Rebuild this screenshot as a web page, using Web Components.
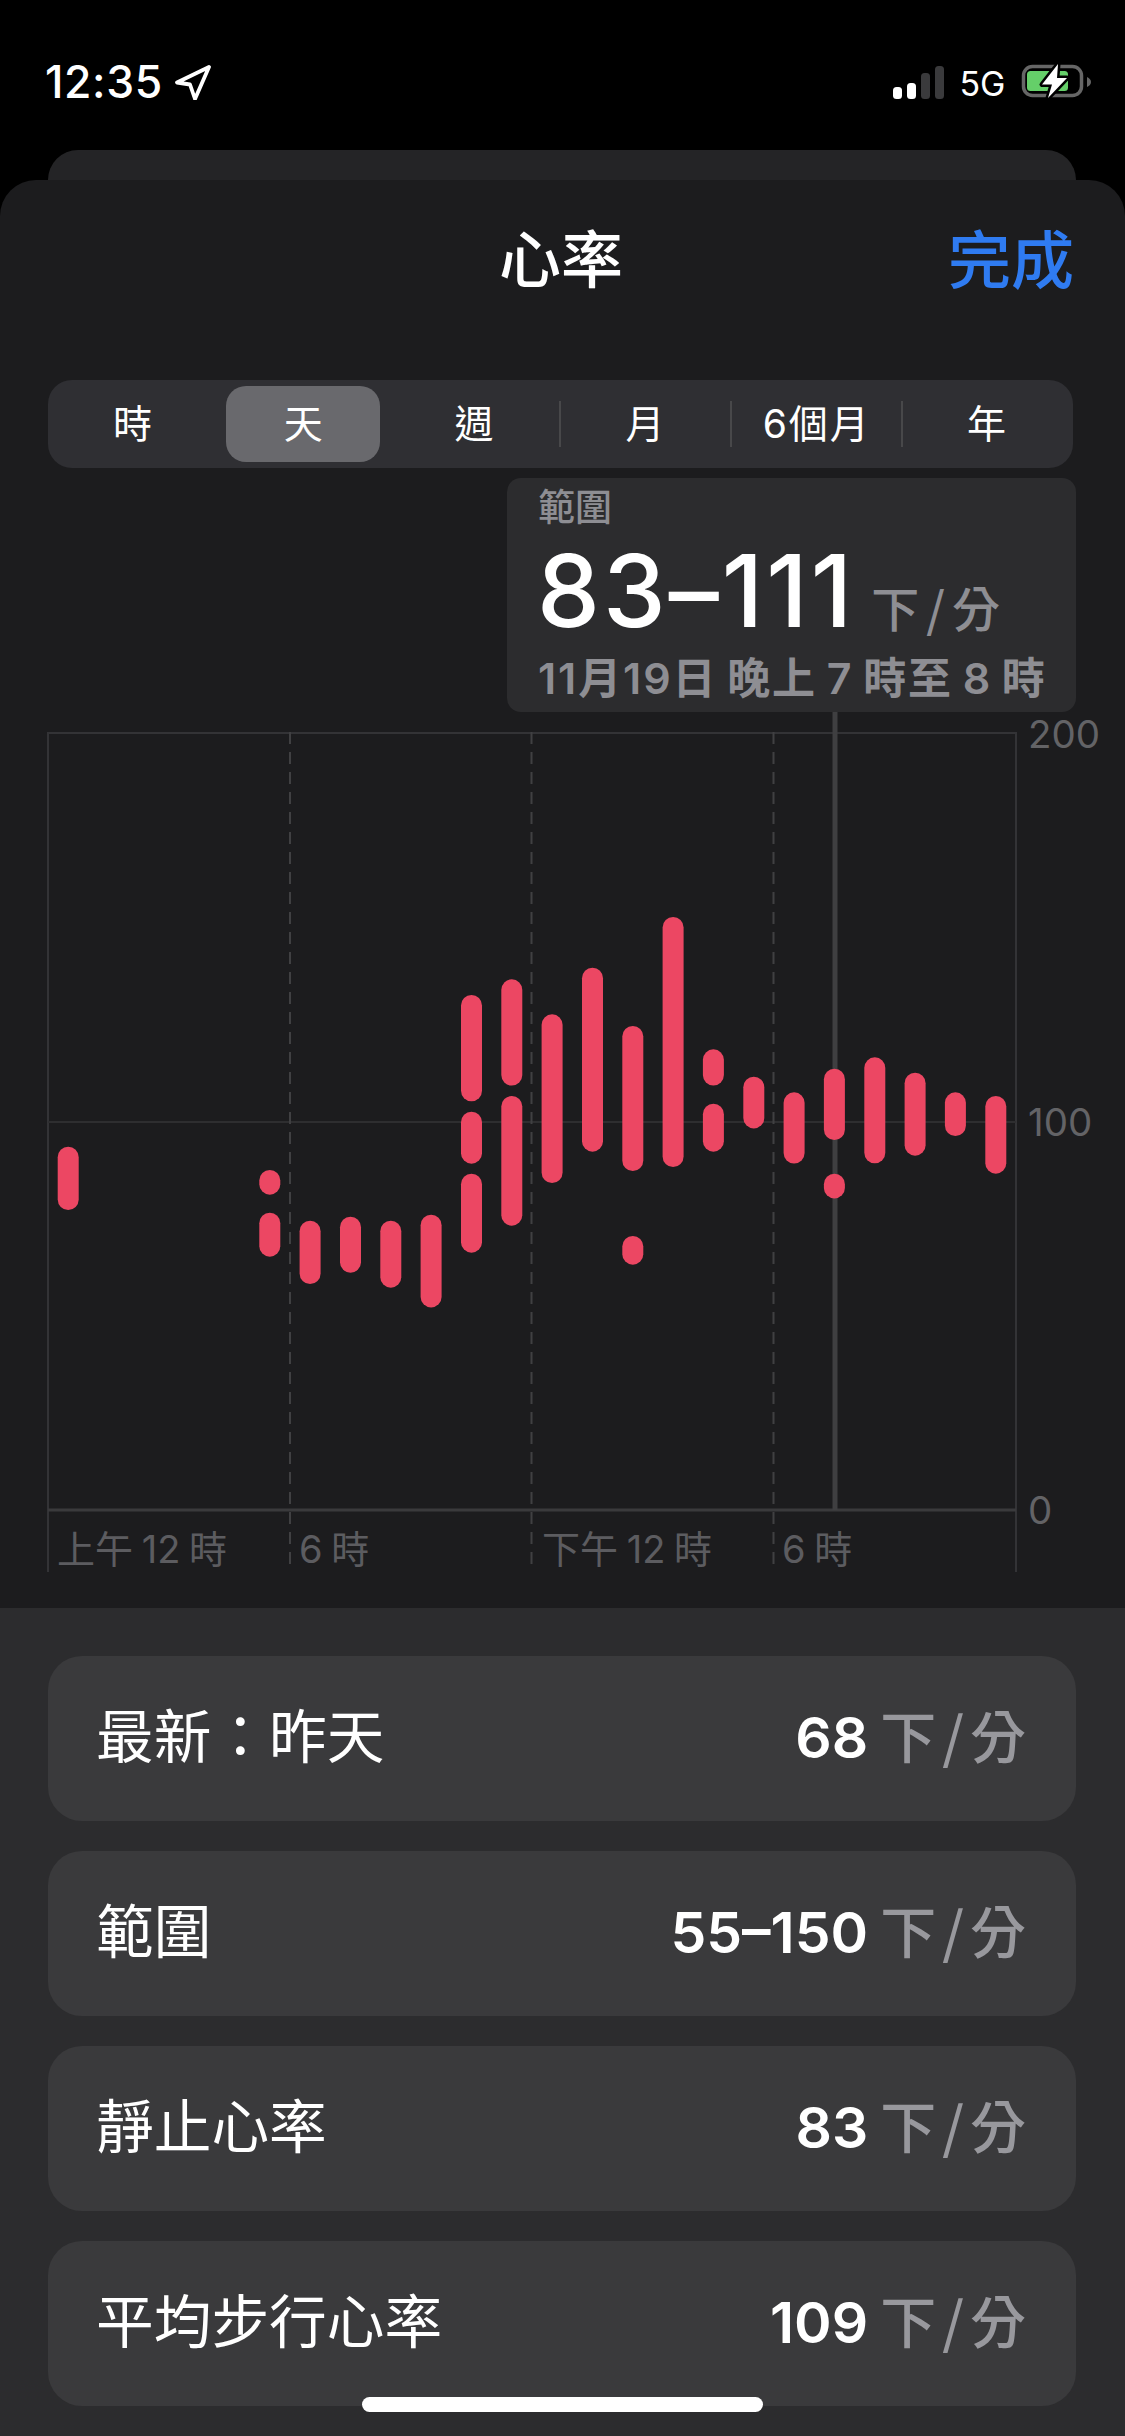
<!DOCTYPE html>
<html lang="zh-Hant">
<head>
<meta charset="utf-8">
<title>心率</title>
<style>
html,body{margin:0;padding:0;background:#000}
body{width:1125px;height:2436px;overflow:hidden;position:relative;font-family:Inter,"Noto Sans CJK TC",sans-serif;color:#fff}
</style>
</head>
<body>
<status-bar></status-bar>
<back-peek></back-peek>
<sheet-panel>
  <sheet-header title="心率" action="完成"></sheet-header>
  <segment-bar items="時,天,週,月,6個月,年" selected="1"></segment-bar>
  <range-tip label="範圍" value="83–111" unit="下/分" when="11月19日 晚上 7 時至 8 時"></range-tip>
  <hr-chart></hr-chart>
  <stat-list>
    <stat-row label="最新：昨天" value="68"></stat-row>
    <stat-row label="範圍" value="55–150"></stat-row>
    <stat-row label="靜止心率" value="83"></stat-row>
    <stat-row label="平均步行心率" value="109"></stat-row>
  </stat-list>
</sheet-panel>
<home-bar></home-bar>
<script>
function comp(name, css, html){
  customElements.define(name, class extends HTMLElement{
    connectedCallback(){
      if(this.shadowRoot) return;
      const r=this.attachShadow({mode:'open'});
      const g=n=>this.getAttribute(n)||'';
      r.innerHTML='<style>'+css+'</style>'+html(g,this);
    }
  });
}
comp('status-bar',`
:host{display:flex;height:150px;box-sizing:border-box;padding:0 34px 0 45px}
.time{font:500 44.500px/1 Inter,sans-serif;margin-top:60px;letter-spacing:.6px}
.left{display:flex;gap:11px;align-items:flex-start}
.left svg{margin-top:64px}
.right{margin-left:auto;display:flex;align-items:flex-start}
.sig{margin-top:66px;margin-right:15px}
.five{font:400 34px/1 Inter,sans-serif;margin-top:67px;margin-right:16px;letter-spacing:-.3px}
.bat{margin-top:64px;overflow:visible}
`,()=>`
<div class="left"><span class="time">12:35</span>
<svg width="38" height="36" viewBox="0 0 38 36"><path d="M35 3 3 18.500 16 20.500 21 35z" fill="none" stroke="#fff" stroke-width="3.800" stroke-linejoin="round"/></svg></div>
<div class="right">
<svg class="sig" width="52" height="33" viewBox="0 0 52 33">
<rect x="0" y="21" width="9" height="12" rx="3.500" fill="#fff"/><rect x="14" y="17" width="9" height="16" rx="3.500" fill="#fff"/>
<rect x="28" y="7" width="9" height="26" rx="3.500" fill="#3a3a3c"/><rect x="42" y="0" width="9" height="33" rx="3.500" fill="#3a3a3c"/></svg>
<span class="five">5G</span>
<svg class="bat" width="70" height="36" viewBox="0 0 70 36">
<rect x="2.500" y="2.500" width="58" height="29" rx="9" fill="none" stroke="#666" stroke-width="3.500"/>
<path d="M66 13c2.500 1 4 3 4 5s-1.500 4-4 5z" fill="#666"/>
<rect x="6" y="7" width="41" height="20" rx="3.500" fill="#65cf69"/>
<path d="M37 0 21 20.500h10L27 34 46 14H36z" fill="#fff" stroke="#000" stroke-width="5" paint-order="stroke" stroke-linejoin="round"/></svg>
</div>`);
comp('back-peek',`:host{display:block;height:30px;margin:0 49px 0 48px;background:#242426;border-radius:36px 36px 0 0}`,()=>'');
comp('sheet-panel',`
:host{display:flex;flex-direction:column;height:2256px;background:#1c1c1e;border-radius:36px 36px 0 0;overflow:hidden}
`,()=>'<slot></slot>');
comp('sheet-header',`
:host{display:grid;grid-template-columns:1fr auto 1fr;align-items:center;height:200px;box-sizing:border-box;padding:0 51px 49px 48px}
.t{grid-column:2;font:500 62px/1 "Noto Sans CJK TC",sans-serif}
.a{grid-column:3;justify-self:end;font:500 63px/1 "Noto Sans CJK TC",sans-serif;color:#2f7bf1}
`,g=>`<span class="t" lang="zh-Hant">${g('title')}</span><span class="a" lang="zh-Hant">${g('action')}</span>`);
comp('segment-bar',`
:host{display:grid;grid-template-columns:repeat(6,1fr);height:88px;margin:0 52px 0 48px;background:#2f2f33;border-radius:24px}
.c{display:flex;align-items:center;justify-content:center;position:relative;font:400 39px/1 Inter,"Noto Sans CJK TC",sans-serif;color:#fff;letter-spacing:2px}
.c.sel::before{content:"";position:absolute;inset:6px 10px 6px 7px;background:#69696d;border-radius:20px}
.c span{position:relative;margin:-2px 0 0 0}
.c.div::after{content:"";position:absolute;left:-1px;top:21px;bottom:21px;width:2px;background:#48484a}
`,g=>{
 const sel=+g('selected');
 return g('items').split(',').map((t,i)=>`<div class="c ${i===sel?'sel':''} ${i>=3?'div':''}"><span>${t}</span></div>`).join('');
});
comp('range-tip',`
:host{display:block;align-self:flex-end;box-sizing:border-box;width:569px;height:234px;margin:10px 49px 0 0;padding:0 0 0 31px;background:#2c2c2e;border-radius:14px}
.l{font:500 37px/1 "Noto Sans CJK TC",sans-serif;color:#8e8e93;padding-top:9px;height:40px}
.v{display:flex;align-items:baseline;margin-top:14px;height:100px;line-height:100px}
.n{font:500 100px/100px Inter,sans-serif;letter-spacing:3px;margin-left:-1px}
.u{font:500 48px/1 "Noto Sans CJK TC",Inter,sans-serif;color:#8e8e93;margin-left:16px;letter-spacing:7px}
.w{font:600 43px/1 Inter,"Noto Sans CJK TC",sans-serif;color:#8e8e93;margin-top:16px;white-space:nowrap;letter-spacing:1.900px;word-spacing:-3px}
`,g=>`<div class="l">${g('label')}</div><div class="v"><span class="n">${g('value')}</span><span class="u">${g('unit')}</span></div><div class="w">${g('when')}</div>`);
comp('hr-chart',`
:host{display:block;position:relative;height:876px;margin-top:20px;flex:none}
svg{position:absolute;left:0;top:0;overflow:visible}
.y,.x{position:absolute;color:#636366;white-space:nowrap;font:400 38px/1 Inter,"Noto Sans CJK TC",sans-serif}
.y{left:1028px;font-size:38.500px}
.x{top:798px;word-spacing:-2px;color:#5c5c60}
`,()=>{
 const H=[[0,[[800,990]]],[5,[[870,944],[998,1130]]],[6,[[1022,1212]]],[7,[[1010,1178]]],[8,[[1022,1223]]],[9,[[1004,1282]]],[10,[[345,664],[695,851],[881,1118]]],[11,[[298,617],[648,1037]]],[12,[[403,909]]],[13,[[263,815]]],[14,[[438,873],[1068,1154]]],[15,[[111,861]]],[16,[[508,617],[671,815]]],[17,[[590,745]]],[18,[[637,851]]],[19,[[566,780],[881,955]]],[20,[[532,850]]],[21,[[578,827]]],[22,[[637,768]]],[23,[[648,881]]]];
 let bars='';
 for(const [h,rs] of H) for(const [a,b] of rs){
  const cx=48+40.33*(h+.5), y=148+a/3, ht=(b-a)/3;
  bars+=`<rect x="${(cx-10.5).toFixed(1)}" y="${y.toFixed(1)}" width="21" height="${ht.toFixed(1)}" rx="10.500" fill="#ec4763"/>`;
 }
 const dash=[290,531.5,773.5].map(x=>`<line x1="${x}" x2="${x}" y1="0" y2="835" stroke="#404042" stroke-width="2" stroke-dasharray="12 8"/>`).join('');
 return `<svg width="1125" height="876" viewBox="0 0 1125 876">
 <line x1="48" x2="48" y1="0" y2="840" stroke="#333336" stroke-width="2"/>
 <line x1="1016" x2="1016" y1="0" y2="840" stroke="#333336" stroke-width="2"/>
 <line x1="48" x2="1016" y1="1" y2="1" stroke="#333336" stroke-width="2"/>
 <line x1="48" x2="1016" y1="390" y2="390" stroke="#2e2e30" stroke-width="2"/>
 ${dash}
 <line x1="48" x2="1016" y1="778" y2="778" stroke="#3a3a3c" stroke-width="3"/>
 <line x1="835" x2="835" y1="-20" y2="778" stroke="#3f3f41" stroke-width="5"/>
 ${bars}</svg>
 <span class="y" style="top:-17px">200</span><span class="y" style="top:371px">100</span><span class="y" style="top:759px">0</span>
 <span class="x" style="left:57px">上午 12 時</span><span class="x" style="left:299px">6 時</span><span class="x" style="left:542px">下午 12 時</span><span class="x" style="left:782px">6 時</span>`;
});
comp('stat-list',`
:host{display:flex;flex-direction:column;flex:1;gap:30px;background:#2c2c2e;padding:48px 49px 0 48px}
`,()=>'<slot></slot>');
comp('stat-row',`
:host{display:flex;align-items:center;justify-content:space-between;height:165px;box-sizing:border-box;padding:0 50px 5px 48px;background:#3a3a3c;border-radius:34px}
.l{font:400 57.700px/1 "Noto Sans CJK TC",sans-serif;margin-top:-4px}
.r{display:flex;align-items:baseline;gap:12px}
.v{font:600 57px/1 Inter,sans-serif}
.u{font:500 56px/1 "Noto Sans CJK TC",sans-serif;color:#98989d;letter-spacing:6px;margin-right:-6px}
`,g=>`<span class="l">${g('label')}</span><span class="r"><span class="v">${g('value')}</span><span class="u">下/分</span></span>`);
comp('home-bar',`
:host{display:block;position:absolute;left:362px;top:2397px;width:401px;height:15px;border-radius:8px;background:#fff}
`,()=>'');
</script>
</body>
</html>
